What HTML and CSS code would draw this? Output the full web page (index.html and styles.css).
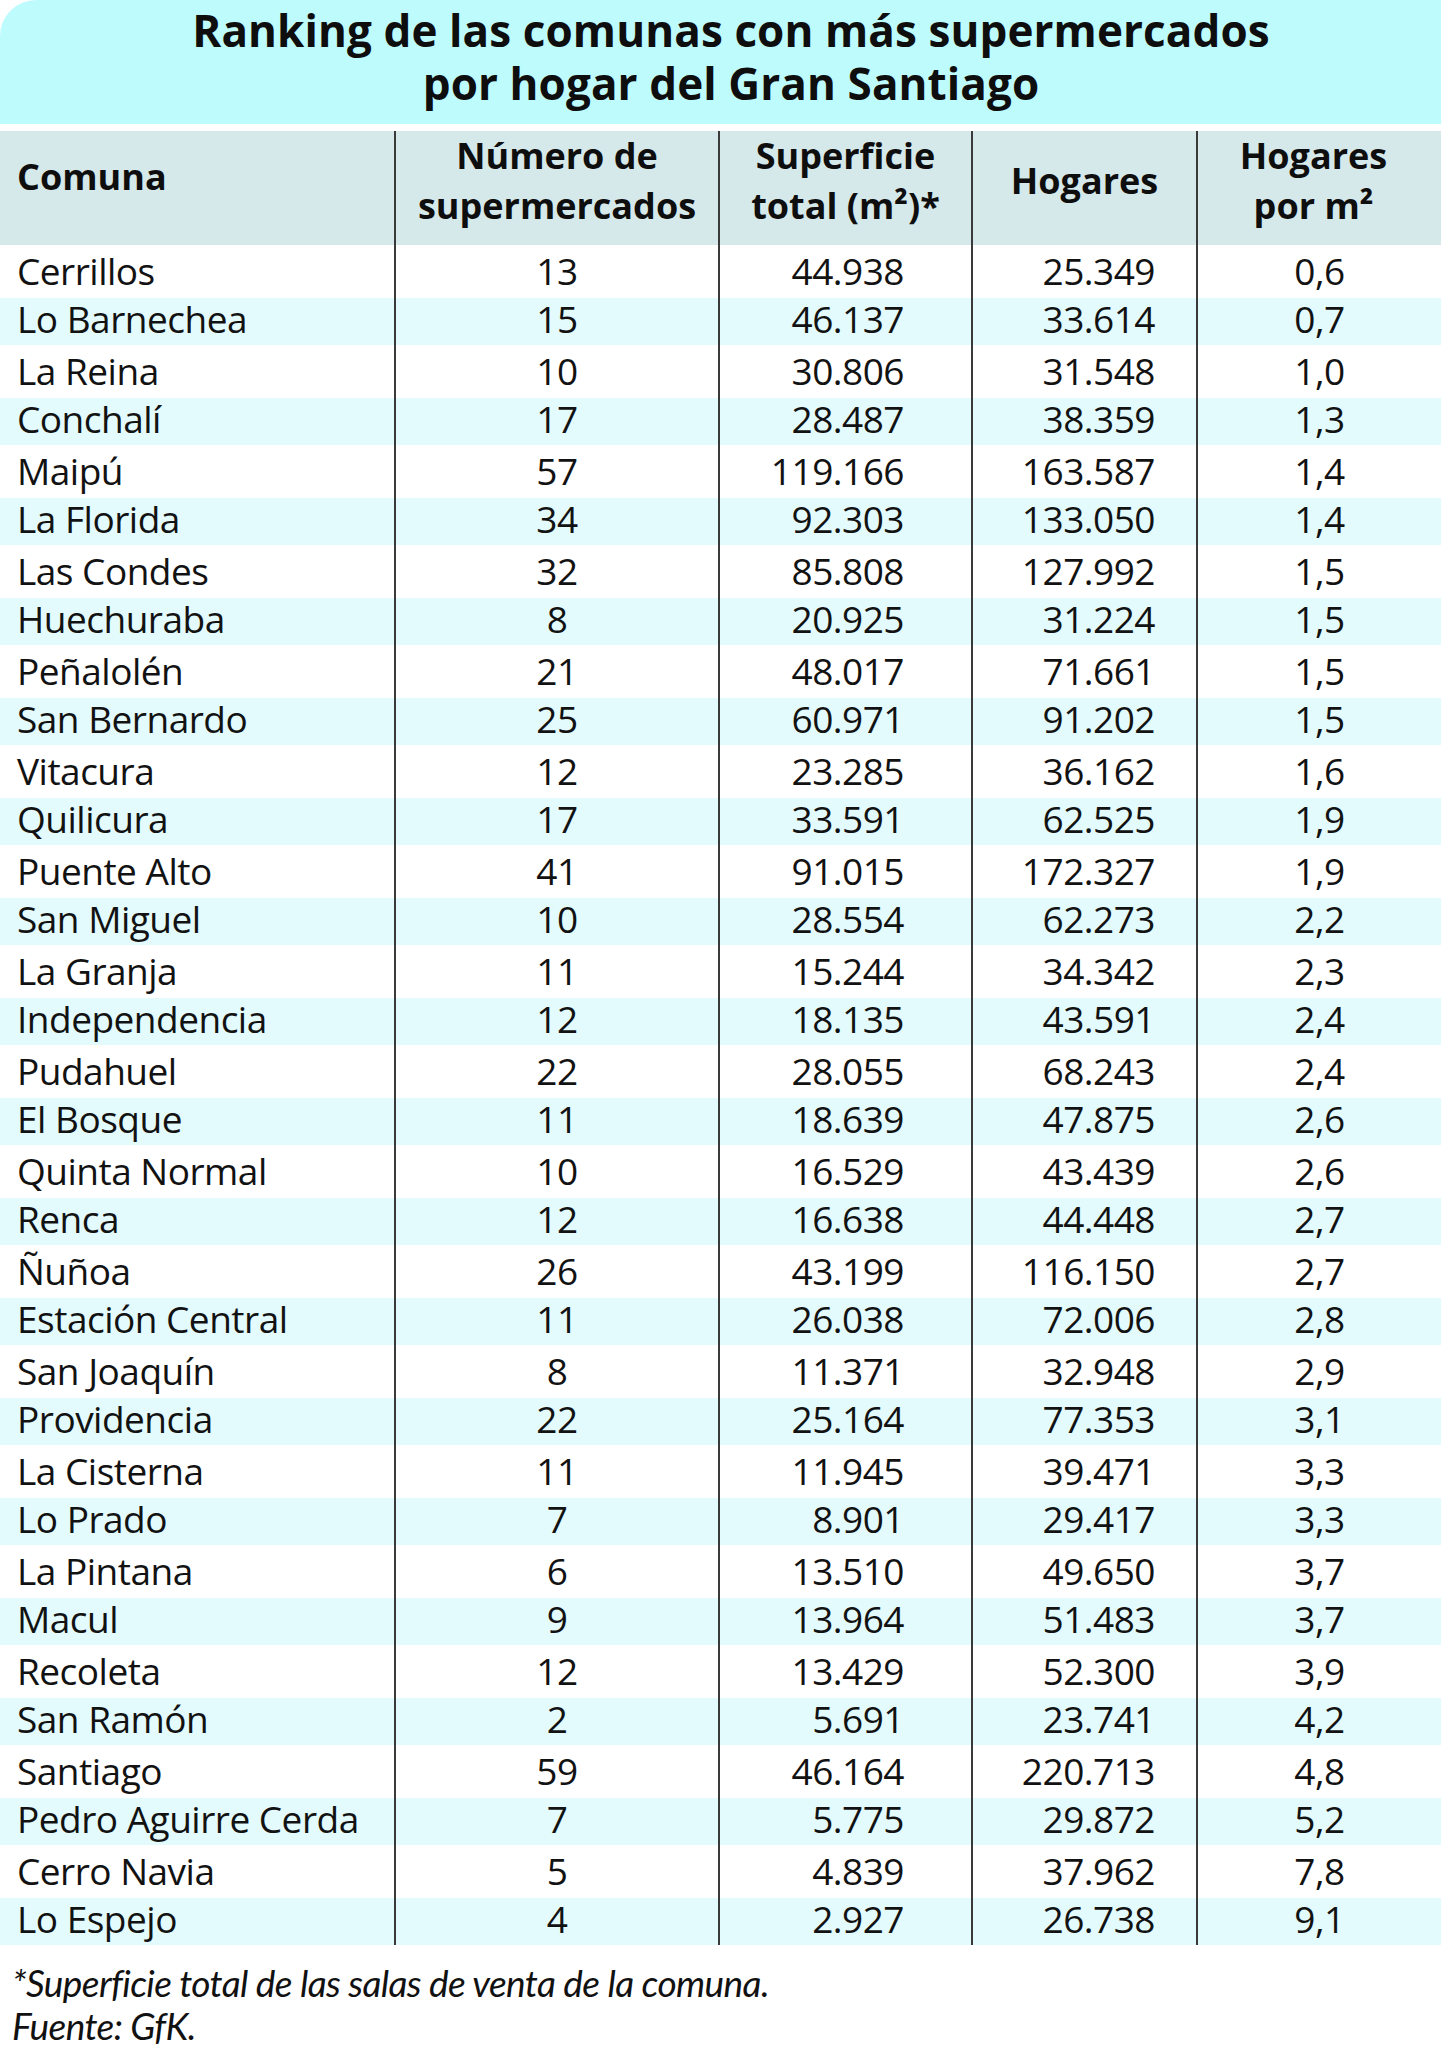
FILE: index.html
```html
<!DOCTYPE html>
<html lang="es">
<head>
<meta charset="utf-8">
<title>Ranking de las comunas con más supermercados por hogar del Gran Santiago</title>
<link rel="stylesheet" href="styles.css">
</head>
<body>
<div class="page">
  <header class="title-band">
    <h1 class="title"><span class="title-line">Ranking de las comunas con más supermercados</span><span class="title-line">por hogar del Gran Santiago</span></h1>
  </header>
  <table class="ranking">
    <colgroup>
      <col class="c1"><col class="c2"><col class="c3"><col class="c4"><col class="c5">
    </colgroup>
    <thead>
      <tr>
        <th class="h-comuna">Comuna</th>
        <th class="h-center">Número de<br>supermercados</th>
        <th class="h-center">Superficie<br>total (m²)*</th>
        <th class="h-center">Hogares</th>
        <th class="h-center h-last">Hogares<br>por m²</th>
      </tr>
    </thead>
    <tbody>
      <tr><td class="name">Cerrillos</td><td class="num">13</td><td class="sup">44.938</td><td class="hog">25.349</td><td class="ratio">0,6</td></tr>
      <tr><td class="name">Lo Barnechea</td><td class="num">15</td><td class="sup">46.137</td><td class="hog">33.614</td><td class="ratio">0,7</td></tr>
      <tr><td class="name">La Reina</td><td class="num">10</td><td class="sup">30.806</td><td class="hog">31.548</td><td class="ratio">1,0</td></tr>
      <tr><td class="name">Conchalí</td><td class="num">17</td><td class="sup">28.487</td><td class="hog">38.359</td><td class="ratio">1,3</td></tr>
      <tr><td class="name">Maipú</td><td class="num">57</td><td class="sup">119.166</td><td class="hog">163.587</td><td class="ratio">1,4</td></tr>
      <tr><td class="name">La Florida</td><td class="num">34</td><td class="sup">92.303</td><td class="hog">133.050</td><td class="ratio">1,4</td></tr>
      <tr><td class="name">Las Condes</td><td class="num">32</td><td class="sup">85.808</td><td class="hog">127.992</td><td class="ratio">1,5</td></tr>
      <tr><td class="name">Huechuraba</td><td class="num">8</td><td class="sup">20.925</td><td class="hog">31.224</td><td class="ratio">1,5</td></tr>
      <tr><td class="name">Peñalolén</td><td class="num">21</td><td class="sup">48.017</td><td class="hog">71.661</td><td class="ratio">1,5</td></tr>
      <tr><td class="name">San Bernardo</td><td class="num">25</td><td class="sup">60.971</td><td class="hog">91.202</td><td class="ratio">1,5</td></tr>
      <tr><td class="name">Vitacura</td><td class="num">12</td><td class="sup">23.285</td><td class="hog">36.162</td><td class="ratio">1,6</td></tr>
      <tr><td class="name">Quilicura</td><td class="num">17</td><td class="sup">33.591</td><td class="hog">62.525</td><td class="ratio">1,9</td></tr>
      <tr><td class="name">Puente Alto</td><td class="num">41</td><td class="sup">91.015</td><td class="hog">172.327</td><td class="ratio">1,9</td></tr>
      <tr><td class="name">San Miguel</td><td class="num">10</td><td class="sup">28.554</td><td class="hog">62.273</td><td class="ratio">2,2</td></tr>
      <tr><td class="name">La Granja</td><td class="num">11</td><td class="sup">15.244</td><td class="hog">34.342</td><td class="ratio">2,3</td></tr>
      <tr><td class="name">Independencia</td><td class="num">12</td><td class="sup">18.135</td><td class="hog">43.591</td><td class="ratio">2,4</td></tr>
      <tr><td class="name">Pudahuel</td><td class="num">22</td><td class="sup">28.055</td><td class="hog">68.243</td><td class="ratio">2,4</td></tr>
      <tr><td class="name">El Bosque</td><td class="num">11</td><td class="sup">18.639</td><td class="hog">47.875</td><td class="ratio">2,6</td></tr>
      <tr><td class="name">Quinta Normal</td><td class="num">10</td><td class="sup">16.529</td><td class="hog">43.439</td><td class="ratio">2,6</td></tr>
      <tr><td class="name">Renca</td><td class="num">12</td><td class="sup">16.638</td><td class="hog">44.448</td><td class="ratio">2,7</td></tr>
      <tr><td class="name">Ñuñoa</td><td class="num">26</td><td class="sup">43.199</td><td class="hog">116.150</td><td class="ratio">2,7</td></tr>
      <tr><td class="name">Estación Central</td><td class="num">11</td><td class="sup">26.038</td><td class="hog">72.006</td><td class="ratio">2,8</td></tr>
      <tr><td class="name">San Joaquín</td><td class="num">8</td><td class="sup">11.371</td><td class="hog">32.948</td><td class="ratio">2,9</td></tr>
      <tr><td class="name">Providencia</td><td class="num">22</td><td class="sup">25.164</td><td class="hog">77.353</td><td class="ratio">3,1</td></tr>
      <tr><td class="name">La Cisterna</td><td class="num">11</td><td class="sup">11.945</td><td class="hog">39.471</td><td class="ratio">3,3</td></tr>
      <tr><td class="name">Lo Prado</td><td class="num">7</td><td class="sup">8.901</td><td class="hog">29.417</td><td class="ratio">3,3</td></tr>
      <tr><td class="name">La Pintana</td><td class="num">6</td><td class="sup">13.510</td><td class="hog">49.650</td><td class="ratio">3,7</td></tr>
      <tr><td class="name">Macul</td><td class="num">9</td><td class="sup">13.964</td><td class="hog">51.483</td><td class="ratio">3,7</td></tr>
      <tr><td class="name">Recoleta</td><td class="num">12</td><td class="sup">13.429</td><td class="hog">52.300</td><td class="ratio">3,9</td></tr>
      <tr><td class="name">San Ramón</td><td class="num">2</td><td class="sup">5.691</td><td class="hog">23.741</td><td class="ratio">4,2</td></tr>
      <tr><td class="name">Santiago</td><td class="num">59</td><td class="sup">46.164</td><td class="hog">220.713</td><td class="ratio">4,8</td></tr>
      <tr><td class="name">Pedro Aguirre Cerda</td><td class="num">7</td><td class="sup">5.775</td><td class="hog">29.872</td><td class="ratio">5,2</td></tr>
      <tr><td class="name">Cerro Navia</td><td class="num">5</td><td class="sup">4.839</td><td class="hog">37.962</td><td class="ratio">7,8</td></tr>
      <tr><td class="name">Lo Espejo</td><td class="num">4</td><td class="sup">2.927</td><td class="hog">26.738</td><td class="ratio">9,1</td></tr>
    </tbody>
  </table>
  <footer class="notes">
    <p class="note">*Superficie total de las salas de venta de la comuna.</p>
    <p class="note">Fuente: GfK.</p>
  </footer>
</div>
</body>
</html>
```

FILE: styles.css
```css
html, body {
  margin: 0;
  padding: 0;
  background: #ffffff;
}

body {
  font-family: "Open Sans", "Noto Sans", "DejaVu Sans", sans-serif;
  color: #111111;
}

.page {
  width: 1441px;
}

.title-band {
  background: #befbfd;
  border-top-left-radius: 36px;
  height: 124px;
  box-sizing: border-box;
  padding: 6px 0 0 21px;
  margin-bottom: 7px;
}

.title {
  margin: 0;
  font-size: 44px;
  font-weight: 700;
  text-align: center;
  color: #0e0e0e;
  letter-spacing: 0.1px;
}

.title-line {
  display: block;
  height: 53px;
  line-height: 48px;
}

.ranking {
  width: 1441px;
  border-collapse: collapse;
  table-layout: fixed;
  border-spacing: 0;
}

.c1 { width: 395px; }
.c2 { width: 324px; }
.c3 { width: 253px; }
.c4 { width: 225px; }
.c5 { width: 244px; }

.ranking thead th {
  background: #d5e8ea;
  height: 110px;
  padding: 0 0 14px 0;
  font-size: 36px;
  line-height: 50px;
  font-weight: 700;
  color: #0e0e0e;
  vertical-align: middle;
  box-sizing: border-box;
}

.ranking th + th,
.ranking td + td {
  border-left: 2px solid #3a3a3a;
}

.ranking thead th.h-comuna {
  text-align: left;
  padding: 0 0 22px 17px;
}

.h-center {
  text-align: center;
}

.ranking thead th.h-last {
  padding-right: 12px;
}

.ranking tbody td {
  font-size: 37px;
  letter-spacing: -0.5px;
  padding: 0;
  vertical-align: top;
  white-space: nowrap;
  color: #121212;
}

.ranking tbody tr:nth-child(odd) td {
  height: 53px;
  line-height: 50px;
  padding-top: 1px;
  box-sizing: border-box;
  background: #ffffff;
}

.ranking tbody tr:nth-child(even) td {
  height: 47px;
  line-height: 41px;
  box-sizing: border-box;
  background: #e3fbfd;
}

.ranking tbody td.name {
  text-align: left;
  padding-left: 17px;
}

.num {
  text-align: center;
}

.ranking tbody td.sup {
  text-align: right;
  padding-right: 67px;
}

.ranking tbody td.hog {
  text-align: right;
  padding-right: 41px;
}

.ratio {
  text-align: center;
}

.notes {
  padding: 16px 0 0 12px;
}

.note {
  margin: 0;
  font-family: "Lato", "Open Sans", sans-serif;
  font-style: italic;
  font-size: 37px;
  letter-spacing: -0.6px;
  line-height: 43px;
  color: #111111;
}
```
